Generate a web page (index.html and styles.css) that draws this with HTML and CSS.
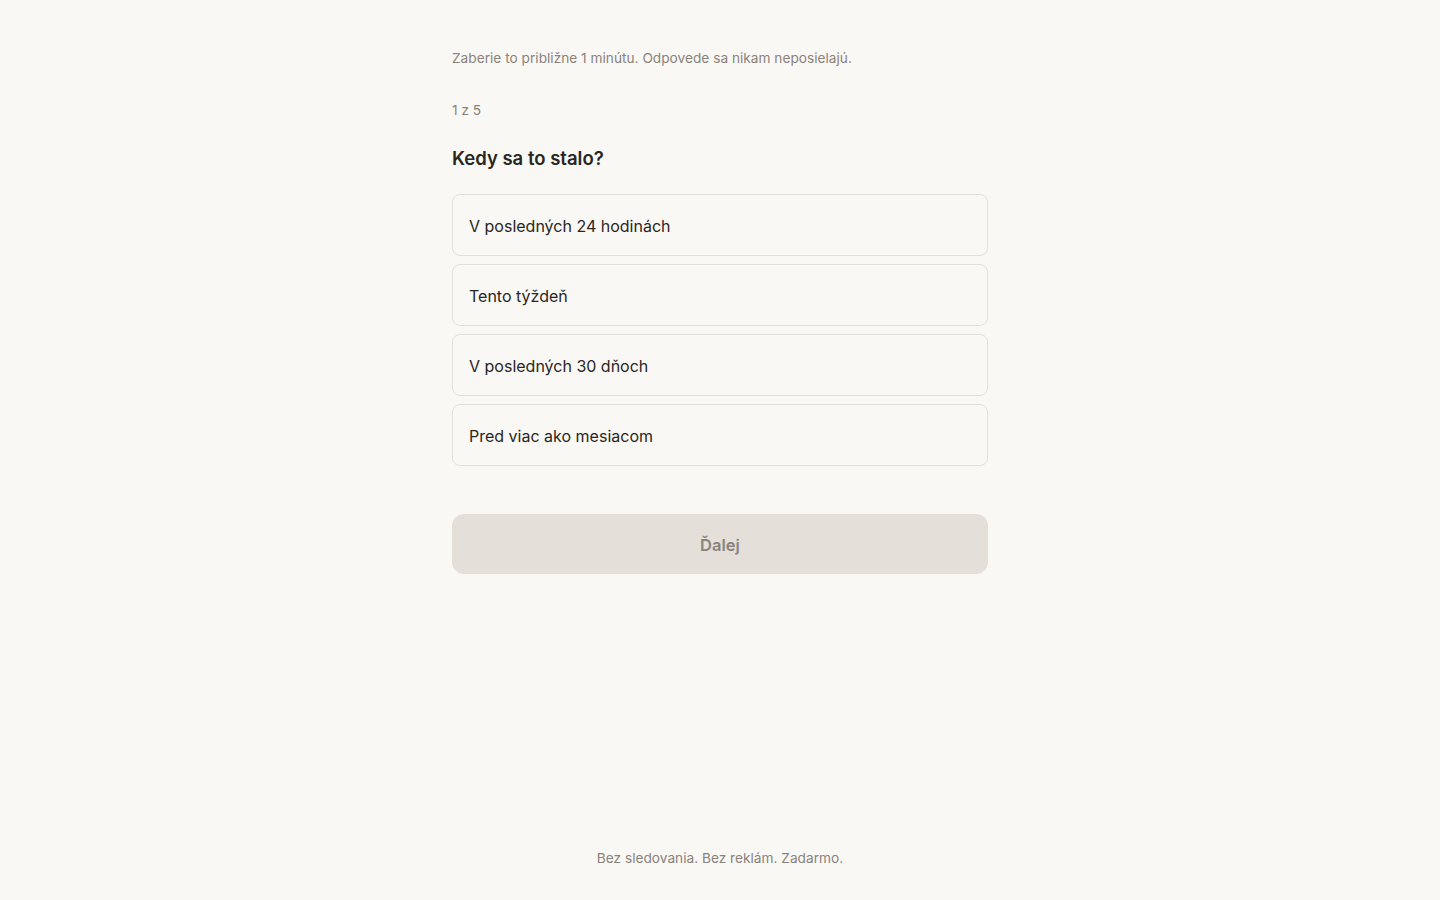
FILE: index.html
```html
<!DOCTYPE html>
<html lang="sk">
<head>
<meta charset="utf-8">
<title>Kedy sa to stalo?</title>
<link rel="stylesheet" href="styles.css">
</head>
<body>
<div class="page">
  <main class="quiz">
    <p class="intro">Zaberie to približne 1 minútu. Odpovede sa nikam neposielajú.</p>
    <p class="step">1 z 5</p>
    <h1 class="question">Kedy sa to stalo?</h1>
    <div class="options">
      <button class="option">V posledných 24 hodinách</button>
      <button class="option">Tento týždeň</button>
      <button class="option">V posledných 30 dňoch</button>
      <button class="option">Pred viac ako mesiacom</button>
    </div>
    <button class="next" disabled>Ďalej</button>
  </main>
  <footer class="footer">Bez sledovania. Bez reklám. Zadarmo.</footer>
</div>
</body>
</html>
```

FILE: styles.css
```css
* { box-sizing: border-box; }
html, body { margin: 0; padding: 0; }
body {
  background: #f9f8f5;
  font-family: Inter, "Noto Sans", sans-serif;
  color: #2a2622;
}
.page {
  min-height: 100vh;
  display: flex;
  flex-direction: column;
  align-items: center;
}
.quiz {
  width: 536px;
  padding-top: 48px;
  flex: 1;
  display: flex;
  flex-direction: column;
}
.intro {
  margin: 0;
  font-size: 13.7px;
  line-height: 20px;
  color: #8a837b;
}
.step {
  margin: 32px 0 0;
  font-size: 13.7px;
  line-height: 20px;
  color: #8a837b;
}
.question {
  margin: 24px 0 0;
  font-size: 18.5px;
  line-height: 28px;
  font-weight: 600;
  color: #2a2622;
}
.options {
  margin-top: 22px;
  display: flex;
  flex-direction: column;
  gap: 8px;
}
.option {
  height: 62px;
  padding: 2px 16px 0;
  text-align: left;
  font-family: inherit;
  font-size: 16px;
  color: #2a2622;
  background: #f9f8f5;
  border: 1px solid #e4e0da;
  border-radius: 8px;
}
.next {
  margin-top: 48px;
  height: 60px;
  padding-top: 2px;
  border: none;
  border-radius: 12px;
  background: #e4dfd9;
  color: #8a847d;
  font-family: inherit;
  font-size: 16.5px;
  font-weight: 600;
}
.footer {
  padding: 0 0 32px;
  font-size: 13.7px;
  line-height: 20px;
  color: #8a837b;
}
```
